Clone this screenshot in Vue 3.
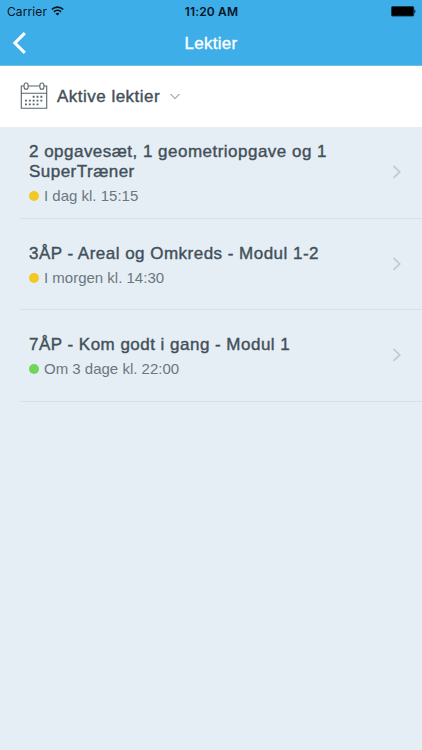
<template>
  <div class="screen">
    <header class="header">
      <div class="status-bar">
        <div class="carrier">
          <span>Carrier</span>
          <svg class="wifi" width="13" height="10" viewBox="0 0 13 10" fill="none">
            <path d="M0.8 3.5C4 0.4 9 0.4 12.2 3.5" stroke="#07141c" stroke-width="1.7"/>
            <path d="M2.9 5.8C4.9 3.9 8.1 3.9 10.1 5.8" stroke="#07141c" stroke-width="1.6"/>
            <path d="M4.5 7.4C5.6 6.4 7.4 6.4 8.5 7.4L6.5 9.5Z" fill="#07141c"/>
          </svg>
        </div>
        <div class="clock">11:20 AM</div>
        <div class="battery">
          <svg width="25" height="11" viewBox="0 0 25 11">
            <rect x="0.5" y="0.5" width="22.3" height="9.6" rx="1.2" fill="#000" stroke="#12384d" stroke-width="0.8"/>
            <path d="M23.4 3.6C24.8 3.9 24.8 6.9 23.4 7.2Z" fill="#07141c"/>
          </svg>
        </div>
      </div>
      <nav class="nav-bar">
        <button class="back-button" aria-label="Tilbage">
          <svg width="14" height="22" viewBox="0 0 14 22" fill="none">
            <path d="M12.8 1.2L2.9 11L12.8 20.8" stroke="#fff" stroke-width="3.1"/>
          </svg>
        </button>
        <h1 class="nav-title">Lektier</h1>
      </nav>
    </header>

    <div class="filter">
      <svg class="calendar" width="28" height="28" viewBox="0 0 28 28" fill="none" stroke="#57656d">
        <path d="M4.1 4H1.3V26.3H26.7V4H23.9M8.1 4H19.9M1.3 11.2H26.7" stroke-width="1.1"/>
        <rect x="4.1" y="1" width="4" height="6.2" rx="2" stroke-width="1.1"/>
        <rect x="19.9" y="1" width="4" height="6.2" rx="2" stroke-width="1.1"/>
        <path d="M12.7 14.8H24M5 18.6H24M5 22.4H20.2" stroke-width="1.9" stroke-dasharray="1.9 1.95"/>
      </svg>
      <span class="filter-label">Aktive lektier</span>
      <svg class="caret" width="10" height="7" viewBox="0 0 10 7" fill="none">
        <path d="M0.6 1L5 5.7L9.4 1" stroke="#5d6a71" stroke-width="0.9"/>
      </svg>
    </div>

    <ul class="list">
      <li v-for="item in homework" :key="item.title" class="row">
        <div class="row-text">
          <h2 class="row-title">{{ item.title }}</h2>
          <div class="row-due">
            <span class="dot" :class="item.status"></span>
            <span>{{ item.due }}</span>
          </div>
        </div>
        <svg class="chevron" width="10" height="14" viewBox="0 0 10 14" fill="none">
          <path d="M1.5 0.9L7.7 6.9L1.5 12.9" stroke="#c5cad0" stroke-width="1.8"/>
        </svg>
      </li>
    </ul>
  </div>
</template>

<script setup>
const homework = [
  { title: '2 opgavesæt, 1 geometriopgave og 1 SuperTræner', due: 'I dag kl. 15:15', status: 'soon' },
  { title: '3ÅP - Areal og Omkreds - Modul 1-2', due: 'I morgen kl. 14:30', status: 'soon' },
  { title: '7ÅP - Kom godt i gang - Modul 1', due: 'Om 3 dage kl. 22:00', status: 'later' }
]
</script>

<style>
body {
  background: #e5eef5;
}
</style>

<style scoped>
.screen {
  height: 750px;
  overflow: hidden;
  background: #e5eef5;
  color: #435059;
  font-family: 'Liberation Sans', Arial, sans-serif;
}

.header {
  box-sizing: border-box;
  height: 66px;
  background: #3eaee9;
  border-bottom: 1px solid #72bde8;
}

.status-bar {
  display: grid;
  grid-template-columns: 1fr auto 1fr;
  align-items: center;
  height: 22px;
  padding: 0 6px 0 7px;
  font-family: Inter, sans-serif;
  font-size: 12px;
  color: #07141c;
}

.carrier {
  display: flex;
  align-items: center;
  gap: 4px;
  letter-spacing: 0.1px;
}

.clock {
  font-weight: 600;
  letter-spacing: 0.15px;
  color: #03141e;
}

.battery {
  display: flex;
  justify-content: flex-end;
}

.nav-bar {
  display: grid;
  grid-template-columns: 1fr auto 1fr;
  align-items: center;
  height: 43px;
  padding: 0 12px;
}

.back-button {
  display: flex;
  width: 14px;
  margin-bottom: 1px;
  padding: 0;
  border: none;
  background: none;
  cursor: pointer;
}

.nav-title {
  margin: 0;
  font-size: 17px;
  font-weight: 400;
  letter-spacing: 0.25px;
  color: #fff;
  -webkit-text-stroke: 0.35px #fff;
}

.filter {
  display: flex;
  align-items: center;
  height: 61px;
  padding-left: 20px;
  background: #fff;
}

.calendar {
  margin-bottom: 1px;
}

.filter-label {
  margin: 0 10px 0 9px;
  font-size: 17px;
  letter-spacing: 0.48px;
  -webkit-text-stroke: 0.4px #435059;
}

.list {
  margin: 0;
  padding: 0 0 0 20px;
  list-style: none;
}

.row {
  box-sizing: border-box;
  display: flex;
  align-items: center;
  height: 91.5px;
  padding: 0 20px 0 9px;
  border-bottom: 1px solid #d8e1ea;
}

.row-text {
  flex: 1;
  padding: 3px 50px 0 0;
}

.row-title {
  margin: 0;
  font-size: 17px;
  line-height: 20px;
  font-weight: 400;
  letter-spacing: 0.48px;
  -webkit-text-stroke: 0.4px #435059;
}

.row-due {
  display: flex;
  align-items: center;
  gap: 5px;
  margin-top: 5px;
  font-size: 15px;
  line-height: 18px;
  color: #6b777f;
}

.dot {
  width: 10px;
  height: 10px;
  border-radius: 50%;
}

.dot.soon {
  background: #f1c925;
}

.dot.later {
  background: #6fd65b;
}

.chevron {
  flex-shrink: 0;
}
</style>
